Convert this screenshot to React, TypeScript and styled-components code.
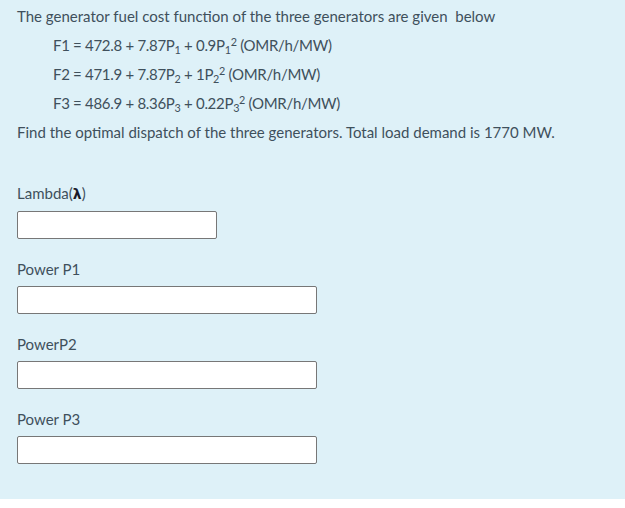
import React from "react";
import styled, { createGlobalStyle } from "styled-components";

const Global = createGlobalStyle`
  html, body { margin: 0; padding: 0; background: #ffffff; }
  body { font-family: Lato, "Open Sans", sans-serif; }
`;

const Panel = styled.div`
  background: #def1f8;
  padding: 2px 17px 35px 17px;
  color: #3f505c;
  font-size: 15px;
`;

const Line = styled.div<{ $indent?: boolean }>`
  line-height: 29px;
  height: 29px;
  padding-left: ${(p) => (p.$indent ? "36px" : "0")};
  letter-spacing: ${(p) => (p.$indent ? "-0.3px" : "0")};
  white-space: pre;
`;

const Sub = styled.sub`
  font-size: 0.72em;
  line-height: 0;
  vertical-align: -0.3em;
`;

const Sup = styled.sup`
  font-size: 0.72em;
  line-height: 0;
  vertical-align: 0.5em;
`;

const Form = styled.div`
  display: flex;
  flex-direction: column;
  gap: 20px;
  margin-top: 36px;
`;

const Field = styled.div`
  display: flex;
  flex-direction: column;
  align-items: flex-start;
  gap: 7px;
`;

const Label = styled.label`
  line-height: 20px;
  font-size: 15px;
`;

const Lambda = styled.span`
  color: #1a1a2a;
  font-family: "DejaVu Sans", sans-serif;
  font-weight: bold;
  font-size: 14px;
`;

const Input = styled.input<{ $w: number }>`
  box-sizing: border-box;
  width: ${(p) => p.$w}px;
  height: 28px;
  border: 1px solid #777;
  border-radius: 2px;
  background: #fff;
  margin: 0;
  padding: 0 6px;
`;

export default function App() {
  return (
    <>
      <Global />
      <Panel>
        <Line>The generator fuel cost function of the three generators are given  below</Line>
        <Line $indent>
          F1 = 472.8 + 7.87P<Sub>1</Sub> + 0.9P<Sub>1</Sub><Sup>2</Sup> (OMR/h/MW)
        </Line>
        <Line $indent>
          F2 = 471.9 + 7.87P<Sub>2</Sub> + 1P<Sub>2</Sub><Sup>2</Sup> (OMR/h/MW)
        </Line>
        <Line $indent>
          F3 = 486.9 + 8.36P<Sub>3</Sub> + 0.22P<Sub>3</Sub><Sup>2</Sup> (OMR/h/MW)
        </Line>
        <Line>Find the optimal dispatch of the three generators. Total load demand is 1770 MW.</Line>
        <Form>
          <Field>
            <Label>
              Lambda(<Lambda>λ</Lambda>)
            </Label>
            <Input $w={200} />
          </Field>
          <Field>
            <Label>Power P1</Label>
            <Input $w={300} />
          </Field>
          <Field>
            <Label>PowerP2</Label>
            <Input $w={300} />
          </Field>
          <Field>
            <Label>Power P3</Label>
            <Input $w={300} />
          </Field>
        </Form>
      </Panel>
    </>
  );
}
